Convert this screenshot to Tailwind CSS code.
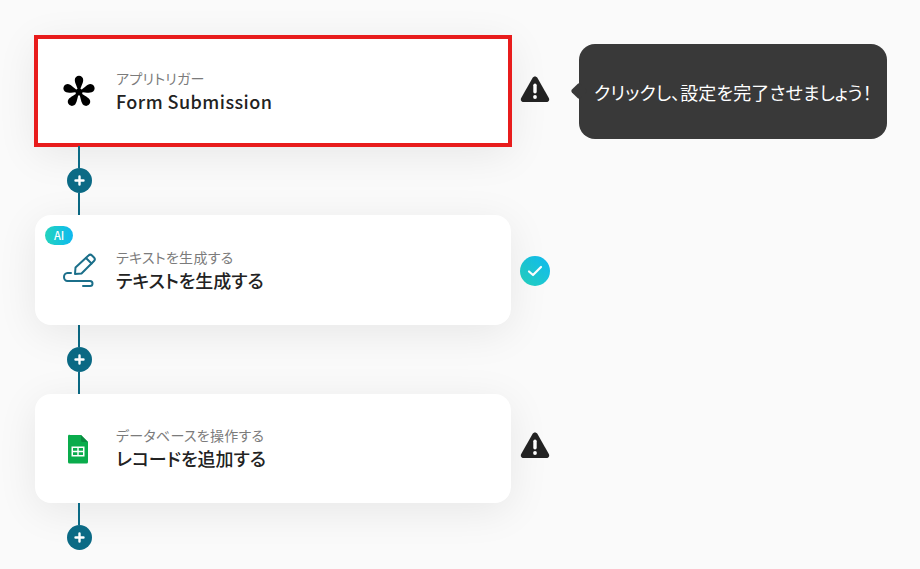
<!DOCTYPE html>
<html lang="ja">
<head>
    <meta charset="UTF-8">
    <title>Flow</title>
    <script src="https://cdn.jsdelivr.net/npm/@tailwindcss/browser@4"></script>
</head>
<body class="bg-[#fafafa] h-[569px] overflow-hidden font-['Noto_Sans_CJK_JP','Noto_Sans',sans-serif] [font-feature-settings:'palt']">

    <div class="pl-[35px] pt-[36px] flex flex-col items-start">

        <!-- Trigger -->
        <div class="flex items-center">
            <div class="w-[476px] h-[110px] bg-white flex items-center pl-[23px] outline-4 outline-offset-[-3px] outline-[#e81c1c] shadow-[0_8px_40px_rgba(0,0,0,0.08)]">
                <svg class="w-[40px] h-[40px] shrink-0" viewBox="0 0 40 40" fill="#000">
                    <g transform="translate(1 1)">
                        <circle cx="20" cy="20" r="3.500"/>
                        <path d="M20 21C18.500 15 15.800 11.500 15.800 8A4.200 4.200 0 0 1 24.200 8C24.200 11.500 21.500 15 20 21Z"/>
                        <path transform="rotate(72 20 20)" d="M20 21C18.500 15 15.800 11.500 15.800 8A4.200 4.200 0 0 1 24.200 8C24.200 11.500 21.500 15 20 21Z"/>
                        <path transform="rotate(144 20 20)" d="M20 21C18.500 15 15.800 11.500 15.800 8A4.200 4.200 0 0 1 24.200 8C24.200 11.500 21.500 15 20 21Z"/>
                        <path transform="rotate(216 20 20)" d="M20 21C18.500 15 15.800 11.500 15.800 8A4.200 4.200 0 0 1 24.200 8C24.200 11.500 21.500 15 20 21Z"/>
                        <path transform="rotate(288 20 20)" d="M20 21C18.500 15 15.800 11.500 15.800 8A4.200 4.200 0 0 1 24.200 8C24.200 11.500 21.500 15 20 21Z"/>
                    </g>
                </svg>
                <div class="ml-[18px] pt-[2px]">
                    <p class="text-[14px] leading-[18px] text-[#7b7b7b] tracking-[0.02em]">アプリトリガー</p>
                    <p class="text-[18px] leading-[28px] font-medium text-[#222] tracking-[0.025em]">Form Submission</p>
                </div>
            </div>
            <svg class="ml-[8px] mb-[4px] w-[32px] h-[32px]" viewBox="0 0 32 32">
                <path d="M16 3.500c-1 0-1.900.5-2.500 1.500L2.200 25c-1.100 2 .2 4 2.400 4h22.800c2.200 0 3.500-2 2.400-4L18.500 5c-.6-1-1.500-1.500-2.500-1.500z" fill="#222"/>
                <rect x="14.300" y="10.500" width="3.400" height="10" rx="1.700" fill="#fff"/>
                <circle cx="16" cy="24" r="1.900" fill="#fff"/>
            </svg>
            <div class="relative ml-[28px] w-[308px] h-[95px] rounded-[16px] bg-[#393939] flex items-center justify-center pt-[2px] text-white text-[18px] tracking-[0.006em]">
                <span class="absolute left-[-6px] top-[41px] w-[12px] h-[12px] rotate-45 rounded-[2px] bg-[#393939]"></span>
                クリックし、設定を完了させましょう！
            </div>
        </div>

        <!-- Connector -->
        <div class="ml-[31px] w-[26px] h-[69px] flex flex-col items-center">
            <div class="w-[2px] grow bg-[#0b6a85]"></div>
            <div class="w-[25px] h-[25px] shrink-0 rounded-full bg-[#0b6a85] flex items-center justify-center">
                <svg class="w-[13px] h-[13px]" viewBox="0 0 13 13"><path d="M6.500 2.500v8M2.500 6.500h8" stroke="#fff" stroke-width="2.400" stroke-linecap="round"/></svg>
            </div>
            <div class="w-[2px] grow bg-[#0b6a85]"></div>
        </div>

        <!-- AI step -->
        <div class="flex items-center">
            <div class="relative w-[476px] h-[110px] bg-white rounded-[16px] flex items-center pl-[23px] shadow-[0_8px_40px_rgba(0,0,0,0.08)]">
                <span class="absolute left-[10px] top-[11px] w-[28px] h-[19px] rounded-full bg-gradient-to-r from-[#25d3bd] to-[#10b8f0] text-white text-[11px] font-medium leading-[19px] text-center">AI</span>
                <svg class="w-[40px] h-[40px] shrink-0" viewBox="0 0 40 40" fill="none" stroke="#1b6f8a" stroke-width="2" stroke-linecap="round" stroke-linejoin="round">
                    <path d="M17 24l.5-6.500L30.500 5.500a2.500 2.500 0 0 1 3.500 0l2 2a2.500 2.500 0 0 1 0 3.500L23.500 23.500z"/>
                    <path d="M28 8l5.500 5.500"/>
                    <path d="M13 23H9.500a3.500 4 0 0 0 0 8H32a2.500 2.500 0 0 1 0 5h-7"/>
                </svg>
                <div class="ml-[18px] pt-[2px]">
                    <p class="text-[14px] leading-[18px] text-[#7b7b7b] tracking-[0.02em]">テキストを生成する</p>
                    <p class="text-[18px] leading-[28px] font-medium text-[#222]">テキストを生成する</p>
                </div>
            </div>
            <svg class="ml-[9px] mt-[2px] w-[30px] h-[30px]" viewBox="0 0 30 30">
                <defs><linearGradient id="chk" x1="0" y1="1" x2="1" y2="0"><stop offset="0" stop-color="#25d3bd"/><stop offset="1" stop-color="#10b8f0"/></linearGradient></defs>
                <circle cx="15" cy="15" r="15" fill="url(#chk)"/>
                <path d="M9 15.500l4 3.500 8-8" fill="none" stroke="#fff" stroke-width="2.200" stroke-linecap="round" stroke-linejoin="round"/>
            </svg>
        </div>

        <!-- Connector -->
        <div class="ml-[31px] w-[26px] h-[69px] flex flex-col items-center">
            <div class="w-[2px] grow bg-[#0b6a85]"></div>
            <div class="w-[25px] h-[25px] shrink-0 rounded-full bg-[#0b6a85] flex items-center justify-center">
                <svg class="w-[13px] h-[13px]" viewBox="0 0 13 13"><path d="M6.500 2.500v8M2.500 6.500h8" stroke="#fff" stroke-width="2.400" stroke-linecap="round"/></svg>
            </div>
            <div class="w-[2px] grow bg-[#0b6a85]"></div>
        </div>

        <!-- Sheets step -->
        <div class="flex items-center">
            <div class="w-[476px] h-[109px] bg-white rounded-[16px] flex items-center pl-[23px] shadow-[0_8px_40px_rgba(0,0,0,0.08)]">
                <svg class="w-[40px] h-[40px] shrink-0" viewBox="0 0 40 40">
                    <path d="M11.500 6h11.500l7 7v20a1.500 1.500 0 0 1-1.500 1.500h-17a1.500 1.500 0 0 1-1.500-1.500v-26a1.500 1.500 0 0 1 1.500-1.500z" fill="#0aac4c"/>
                    <path d="M23 6l7 7h-5.500a1.500 1.500 0 0 1-1.500-1.500z" fill="#0a8a40"/>
                    <path d="M13.500 17.500h13v10h-13z M15 19v2.800h4.300V19z M20.700 19v2.800h4.300V19z M15 23.200V26h4.300v-2.800z M20.700 23.200V26h4.300v-2.800z" fill="#fff" fill-rule="evenodd"/>
                </svg>
                <div class="ml-[18px] pt-[1px]">
                    <p class="text-[14px] leading-[18px] text-[#7b7b7b] tracking-[0.02em]">データベースを操作する</p>
                    <p class="text-[18px] leading-[28px] font-medium text-[#222]">レコードを追加する</p>
                </div>
            </div>
            <svg class="ml-[8px] mb-[7px] w-[32px] h-[32px]" viewBox="0 0 32 32">
                <path d="M16 3.500c-1 0-1.900.5-2.500 1.500L2.200 25c-1.100 2 .2 4 2.400 4h22.800c2.200 0 3.500-2 2.400-4L18.500 5c-.6-1-1.500-1.500-2.500-1.500z" fill="#222"/>
                <rect x="14.300" y="10.500" width="3.400" height="10" rx="1.700" fill="#fff"/>
                <circle cx="16" cy="24" r="1.900" fill="#fff"/>
            </svg>
        </div>

        <!-- Connector -->
        <div class="ml-[31px] w-[26px] h-[47px] flex flex-col items-center">
            <div class="w-[2px] grow bg-[#0b6a85]"></div>
            <div class="w-[25px] h-[25px] shrink-0 rounded-full bg-[#0b6a85] flex items-center justify-center">
                <svg class="w-[13px] h-[13px]" viewBox="0 0 13 13"><path d="M6.500 2.500v8M2.500 6.500h8" stroke="#fff" stroke-width="2.400" stroke-linecap="round"/></svg>
            </div>
        </div>

    </div>

</body>
</html>
